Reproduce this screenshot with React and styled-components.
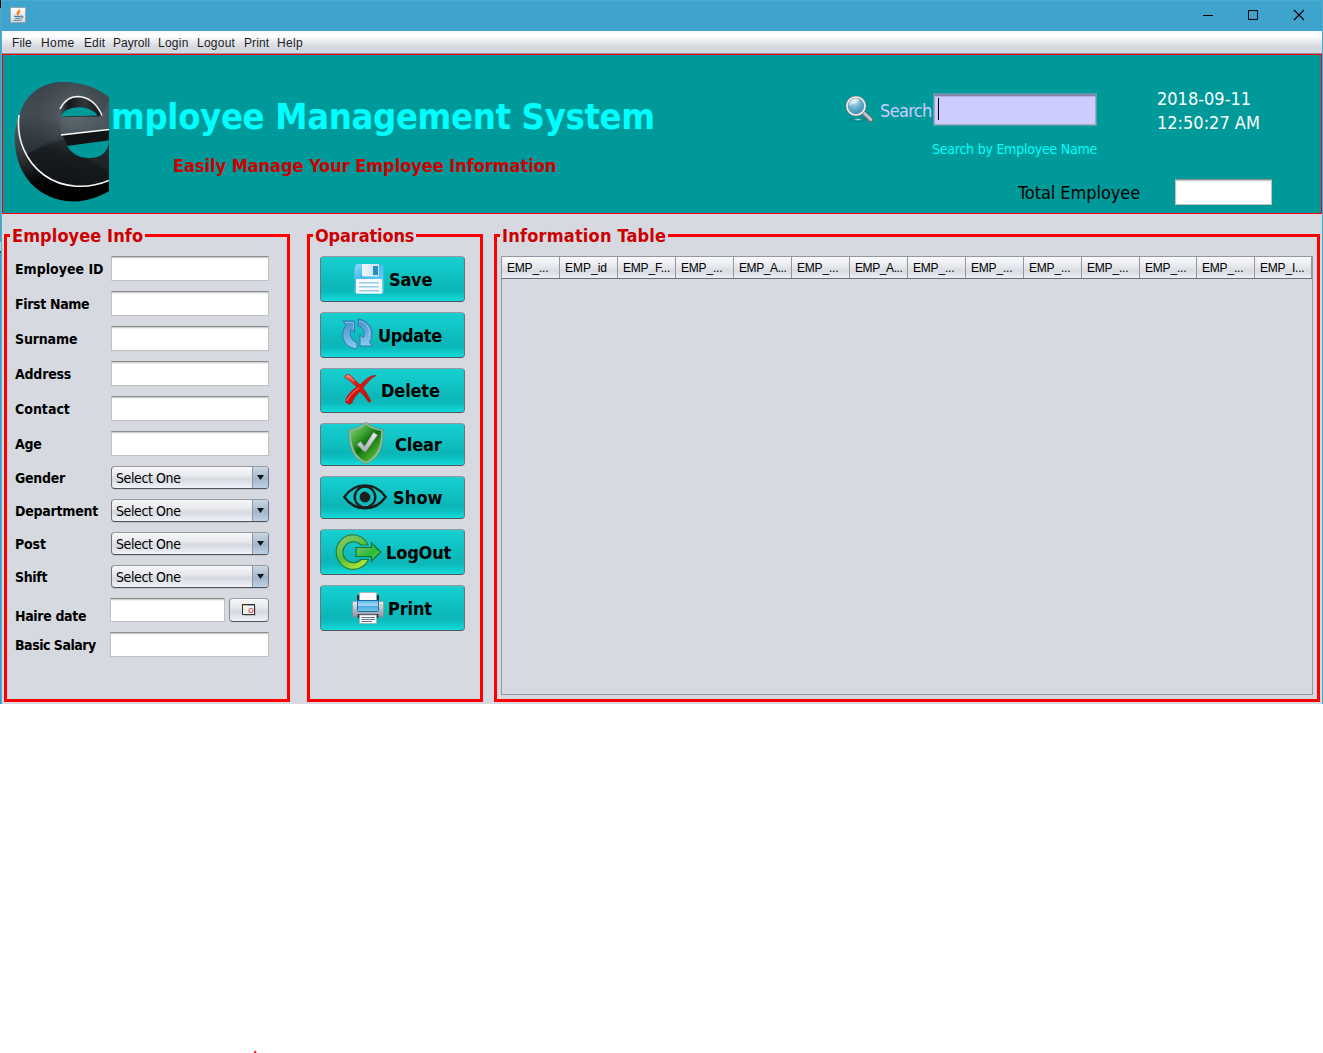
import React from "react";
import styled, { createGlobalStyle } from "styled-components";

const Global = createGlobalStyle`
  * { box-sizing: border-box; }
  body { margin: 0; background: #fff; overflow: hidden; }
`;

const ui = `"DejaVu Sans Condensed", "DejaVu Sans", sans-serif`;
const arial = `"Liberation Sans", Arial, sans-serif`;

const Page = styled.div`
  height: 1053px;
  display: flex;
  flex-direction: column;
  justify-content: space-between;
  font-family: ${ui};
  font-stretch: condensed;
  color: #000;
`;

const Window = styled.div`
  width: 1323px;
  height: 704px;
  display: grid;
  grid-template-columns: 2px 1320px 1px;
  grid-template-rows: 31px 23px 160px 490px;
  background: #d6d9e0;
`;

const EdgeLeft = styled.div`
  grid-row: 1 / 5;
  background: linear-gradient(
    to bottom,
    #000 0 8px, #48a3bf 8px 242px, #a9d8cf 242px 251px, #1e5060 251px 253px, #3a9cc2 253px
  );
  border-right: 1px solid #53add0;
`;

const EdgeRight = styled.div`
  grid-row: 1 / 5;
  grid-column: 3;
  background: #4cabd0;
`;

const TitleBar = styled.header`
  grid-column: 2;
  display: flex;
  align-items: center;
  justify-content: space-between;
  padding: 0 17px 2px 8px;
  background: #3ea4ce;
  border-top: 1px solid #4aaccd;
`;

const WindowControls = styled.div`
  display: flex;
  gap: 34px;
  svg { display: block; }
`;

const MenuBar = styled.nav`
  grid-column: 2;
  display: flex;
  padding-left: 10px;
  background: linear-gradient(#f6f7f8 0, #ffffff 5px, #eeeff2 9px, #dcdee4 14px, #d3d6de 18px, #d6d9e0 21px);
  border-bottom: 1px solid #8f9298;
`;

const MenuItem = styled.span`
  width: ${(p) => p.$w}px;
  white-space: nowrap;
  font: 12px/24px ${arial};
  letter-spacing: ${(p) => p.$ls ?? 0.25}px;
  color: #1c1c24;
`;

const Banner = styled.section`
  grid-column: 2;
  display: flex;
  background: #009999;
  border: 1px solid #ff0000;
`;

const LogoSlot = styled.div`
  width: 106px;
  padding: 27px 0 0 11px;
  svg { display: block; }
`;

const Titles = styled.div`
  width: 736px;
  padding: 40px 0 0 2px;
`;

const Title = styled.h1`
  margin: 0;
  font-size: 36px;
  line-height: 44px;
  letter-spacing: -0.3px;
  color: #00ffff;
  white-space: nowrap;
`;

const Subtitle = styled.h2`
  margin: 15px 0 0 62px;
  font-size: 18px;
  line-height: 24px;
  letter-spacing: -0.04px;
  color: #cc0000;
  white-space: nowrap;
`;

const Status = styled.div`
  flex: 1;
  padding-top: 32px;
`;

const StatusTop = styled.div`
  display: flex;
  height: 92px;
`;

const SearchRow = styled.div`
  display: flex;
  align-items: flex-start;
  padding-top: 6px;
  width: 252px;
`;

const Magnifier = styled.svg`
  margin-top: 2px;
  flex: none;
`;

const SearchLabel = styled.label`
  width: 53px;
  margin-left: 7px;
  flex: none;
  font-size: 18px;
  line-height: 35px;
  letter-spacing: -0.65px;
  color: #ccccff;
  white-space: nowrap;
`;

const SearchField = styled.div`
  width: 164px;
  height: 33px;
  flex: none;
  padding: 4px 5px 5px 4px;
  background: #ccccff;
  border: 1px solid #4f9fbe;
  box-shadow: inset 0 2px 0 #8484a6, inset 1px 0 0 #a3a3b8, inset -1px -1px 0 #a9a9b4, inset 0 3px 1px #b0b0dc;
`;

const Caret = styled.span`
  display: block;
  width: 1px;
  height: 22px;
  background: #000;
`;

const Hint = styled.div`
  margin: 11px 0 0 87px;
  font-size: 14px;
  line-height: 20px;
  letter-spacing: -0.23px;
  color: #00ffff;
  white-space: nowrap;
`;

const Clock = styled.div`
  margin-left: 60px;
  font-size: 18px;
  line-height: 24px;
  color: #fff;
  white-space: nowrap;
`;

const TotalRow = styled.div`
  display: flex;
  align-items: flex-start;
  padding-left: 173px;
`;

const TotalLabel = styled.div`
  width: 157px;
  font-size: 18px;
  line-height: 28px;
  letter-spacing: -0.05px;
  white-space: nowrap;
`;

const Body = styled.main`
  grid-column: 2;
  display: flex;
  align-items: flex-start;
  padding: 11px 0 0 2px;
`;

const Group = styled.fieldset`
  width: ${(p) => p.$w}px;
  height: 477px;
  margin: 0 ${(p) => p.$after ?? 0}px 0 0;
  padding: 10px 3px 0;
  min-width: 0;
  border: 3px solid #ff0000;
`;

const Legend = styled.legend`
  width: ${(p) => p.$w}px;
  height: 21px;
  padding: 0 0 0 2px;
  font-weight: bold;
  font-size: 18px;
  line-height: 22px;
  letter-spacing: ${(p) => p.$ls ?? 0}px;
  color: #cc0000;
  white-space: nowrap;
`;

const Row = styled.div`
  display: flex;
  height: ${(p) => p.$h ?? 25}px;
  margin-bottom: 10px;
  padding-left: 5px;
`;

const Label = styled.label`
  width: ${(p) => p.$w ?? 96}px;
  padding-top: ${(p) => p.$drop ?? 0}px;
  flex: none;
  font-weight: bold;
  font-size: 14px;
  line-height: 25px;
  letter-spacing: ${(p) => p.$ls ?? -0.3}px;
  white-space: nowrap;
`;

const Field = styled.div`
  width: ${(p) => p.$w ?? 158}px;
  height: ${(p) => p.$h ?? 25}px;
  background: #fff;
  border: 1px solid #c0c0c3;
  border-top-color: #8c8d8f;
  box-shadow: inset 0 1px 0 #cfcfd0, inset 0 2px 0 #f1f1f1;
`;

const Combo = styled.div`
  display: flex;
  width: 158px;
  height: 23px;
  padding-left: 4px;
  overflow: hidden;
  border: 1px solid #73767c;
  border-top-color: #96999e;
  border-bottom-color: #4f535a;
  border-radius: 4px;
  box-shadow: 0 1px 0 #c3c6cd;
  background: linear-gradient(#f8f8fa, #e8e9ed 40%, #d6d9df 58%, #f0f3f9);
  font-size: 14px;
  line-height: 23px;
  letter-spacing: -0.4px;
  white-space: nowrap;
`;

const ComboArrow = styled.span`
  display: flex;
  width: 16px;
  margin-left: auto;
  align-items: center;
  justify-content: center;
  border-left: 1px solid #8498ac;
  background: linear-gradient(#c9d8e2, #a4b6c9 55%, #bcd2e6);
`;

const CalendarButton = styled.button`
  display: flex;
  width: 40px;
  height: 24px;
  margin-left: 4px;
  padding: 0;
  align-items: center;
  justify-content: center;
  border: 1px solid #85888e;
  border-top-color: #999ca2;
  border-bottom-color: #50545b;
  border-radius: 4px;
  background: linear-gradient(#f9f9fb, #e4e6ea 40%, #d6d9df 60%, #eff2f8);
`;

const Actions = styled.div`
  display: flex;
  flex-direction: column;
  gap: 10px;
  padding-left: 7px;
`;

const ActionButton = styled.button`
  display: flex;
  width: 145px;
  height: ${(p) => p.$h}px;
  padding: 0 0 0 ${(p) => p.$x - 1}px;
  align-items: center;
  border: 1px solid #5f7a80;
  border-top-color: #8f9ba0;
  border-bottom-color: #4d5860;
  border-radius: 4px;
  background: linear-gradient(#1fd0d1 0, #14cdce 8%, #10c0c1 45%, #0cb6b7 68%, #0cbcbd 80%, #12d9da 99%);
  font: bold 18px/22px ${ui};
  font-stretch: condensed;
  letter-spacing: ${(p) => p.$ls ?? -0.15}px;
  white-space: nowrap;
  color: #000;
`;

const ActionText = styled.span`
  padding-top: 1px;
`;

const IconSlot = styled.span`
  display: flex;
  flex: none;
  width: ${(p) => p.$w}px;
  margin-top: -${(p) => p.$lift ?? 1}px;
  svg { display: block; flex: none; }
`;

const Table = styled.div`
  width: 812px;
  height: 439px;
  margin-left: 1px;
  border: 1px solid #9297a1;
`;

const HeadRow = styled.div`
  display: grid;
  grid-template-columns: repeat(11, 58px) 57px 58px 57px;
  height: 22px;
  border-bottom: 1px solid #6c717b;
  background: linear-gradient(#fbfbfc, #e6e8ec 45%, #d8dbe1 65%, #eceff5);
`;

const HeadCell = styled.div`
  height: 21px;
  padding-left: 5px;
  overflow: hidden;
  border-right: 1px solid #93979f;
  font: 12px/22px ${arial};
  letter-spacing: ${(p) => p.$ls}px;
  white-space: nowrap;
`;

const Speck = styled.div`
  width: 3px;
  height: 2px;
  margin-left: 254px;
  background: linear-gradient(to right, #ff2020 2px, #ff9a9a 2px);
  clip-path: polygon(0 0, 66% 0, 66% 50%, 100% 50%, 100% 100%, 0 100%);
`;

const JavaIcon = () => (
  <svg width="16" height="16" viewBox="0 0 16 16">
    <defs>
      <linearGradient id="jv" x2="0" y2="1"><stop stopColor="#fff" /><stop offset="1" stopColor="#d5d8da" /></linearGradient>
    </defs>
    <rect x=".5" y=".5" width="15" height="15" rx="1" fill="url(#jv)" stroke="#9aa3a8" />
    <path d="M9.500 2.300C10 4 5.800 4.600 7.400 8M10.300 4.400C8 5.500 8.700 6.500 8.500 8" fill="none" stroke="#ef7d1c" strokeWidth="1.300" />
    <path d="M4 9.400h7M5 11.200h5.500M3.500 13.300h8M11 9c3-.4 2 2-.2 2.300" fill="none" stroke="#4f7f9f" strokeWidth="1.100" />
  </svg>
);

const EmployeeLogo = () => (
  <svg width="95" height="121" viewBox="0 0 95 121">
    <defs>
      <linearGradient id="face" x1=".5" y1="0" x2=".4" y2="1">
        <stop stopColor="#3a4248" /><stop offset=".35" stopColor="#434c53" /><stop offset=".65" stopColor="#20262a" /><stop offset="1" stopColor="#13171a" />
      </linearGradient>
      <linearGradient id="side" x1="0" y1="0" x2=".35" y2="1">
        <stop stopColor="#5b6469" /><stop offset=".45" stopColor="#30363a" /><stop offset=".75" stopColor="#050606" /><stop offset="1" stopColor="#000" />
      </linearGradient>
      <radialGradient id="glow" cx=".62" cy=".3" r=".45"><stop stopColor="#69747d" stopOpacity=".75" /><stop offset="1" stopColor="#4d565d" stopOpacity="0" /></radialGradient>
      <linearGradient id="rim"><stop stopColor="#555b5f" /><stop offset=".2" stopColor="#15181a" /><stop offset=".6" stopColor="#30363a" /><stop offset="1" stopColor="#111" /></linearGradient>
    </defs>
    <path d="M6 32C-1 47 0 62 3 75C10 103 33 119.500 60 119.500C74 119 85 115 95 109V95L60 60Z" fill="url(#side)" />
    <path d="M95 15.500C84 6 68 0 47 0C24 1 9 16 5.500 34C2 57 11 80 29 93C48 106 75 108 95 98Z" fill="url(#face)" />
    <path d="M95 15.500C84 6 68 0 47 0C24 1 9 16 5.500 34C2 57 11 80 29 93C48 106 75 108 95 98Z" fill="url(#glow)" />
    <path d="M6 33L47 53L11 73C5 62 4 48 6 33Z" fill="#454e55" opacity=".35" />
    <path d="M11 73L50 57L70 75L95 90V98C65 112 27 105 11 73Z" fill="#0b0e10" opacity=".35" />
    <path d="M47 53L95 46V18L88 33L46 34Z" fill="#5f6970" opacity=".35" />
    <path d="M46 35C44 22 52 15 63 14.500C75 14 84 22 88 33L84 34.500Z" fill="url(#rim)" />
    <path d="M47 34.500C51 23 76 22 83.500 33.500Z" fill="#009999" />
    <path d="M46 27C51 17 57 14.500 64 14.500C76 15 83 22 88 33.500" fill="none" stroke="#f1f1f1" strokeWidth="1.500" />
    <path d="M48 53L95 47V58L54 64Z" fill="#111415" />
    <path d="M47 53L95 47.500" stroke="#fff" strokeWidth="1.700" />
    <path d="M53 64L95 58.500C94 70 88 76 75 76C65 76 58 72 53 64Z" fill="#009999" />
    <path d="M5 33C2 57 12 80 30 93C49 107 75 107 95 98.500" fill="none" stroke="#f4f4f4" strokeWidth="1.600" />
  </svg>
);

const SearchIcon = () => (
  <Magnifier width="28" height="28" viewBox="0 0 28 28">
    <defs>
      <radialGradient id="lens" cx=".4" cy=".25" r=".8"><stop stopColor="#cfeaf3" /><stop offset=".45" stopColor="#69b3cf" /><stop offset="1" stopColor="#2d87b1" /></radialGradient>
      <radialGradient id="lshadow"><stop stopColor="#a5e8e6" /><stop offset=".3" stopColor="#23a5a6" /><stop offset=".5" stopColor="#057f82" /><stop offset="1" stopColor="#009999" stopOpacity="0" /></radialGradient>
    </defs>
    <ellipse cx="13" cy="24.500" rx="12" ry="3.300" fill="url(#lshadow)" />
    <path d="M18 17.500L25.800 25" stroke="#6b6f74" strokeWidth="5" strokeLinecap="round" />
    <path d="M18 17L25.800 24.500" stroke="#c3c5c8" strokeWidth="3" strokeLinecap="round" />
    <circle cx="11" cy="11" r="9.200" fill="url(#lens)" stroke="#767f87" strokeWidth="2.600" />
    <circle cx="11" cy="11" r="9" fill="none" stroke="#e9edf0" strokeWidth="1.700" />
    <path d="M4 9.500C5 4.500 10 2 14 4C14 9 8 8 4 11Z" fill="#fff" opacity=".45" />
  </Magnifier>
);

const SaveIcon = () => (
  <svg width="30" height="30" viewBox="0 0 30 30">
    <defs>
      <linearGradient id="sv" x2=".7" y2="1"><stop stopColor="#94dcfa" /><stop offset=".4" stopColor="#42b9ee" /><stop offset="1" stopColor="#6ed8fa" /></linearGradient>
      <linearGradient id="sv2" x2="1"><stop stopColor="#eff7fb" /><stop offset="1" stopColor="#c5e0ee" /></linearGradient>
    </defs>
    <path d="M2.500 0H27Q29.500.5 29.500 3V28Q29 30 27 30H3Q.5 29.500.5 27V4Z" fill="url(#sv)" />
    <path d="M8 0H25V11Q25 12.500 23.500 12.500H10Q8 12.500 8 11Z" fill="url(#sv2)" />
    <rect x="19" y="2" width="5" height="9" fill="#288fc5" />
    <rect x="2" y="15" width="26" height="14.500" rx="1" fill="#f7fbfd" />
    <path d="M5 18.700H25M5 22.700H25M5 26.700H25" stroke="#9bcbe4" strokeWidth="1.400" />
  </svg>
);

const UpdateIcon = () => (
  <svg width="31" height="32" viewBox="0 0 31 32">
    <defs><linearGradient id="up" x2="0" y2="1"><stop stopColor="#438fca" /><stop offset="1" stopColor="#8cc9f0" /></linearGradient></defs>
    <g fill="url(#up)" stroke="#2f78b2" strokeWidth="1" strokeLinejoin="round">
      <path d="M.7 3H12.500V15L9.300 11.700C7 16 9 22.500 15 24.500V31C6 30.500.7 23.500.7 17C.7 13 2 9.500 4.300 6.800Z" />
      <path d="M16 1C24 1.500 30 8 30 15.500C30 19 29 22 27.500 24.500L30.500 28H18V16.500L21.500 19.500C24 14 21 9 16 8Z" />
    </g>
    <path d="M3 4.500H11.500V11M17 3C24 4 29 11 27 18" fill="none" stroke="#b9dff6" opacity=".6" />
  </svg>
);

const DeleteIcon = () => (
  <svg width="33" height="31" viewBox="0 0 33 31">
    <defs><linearGradient id="dl" x2=".6" y2="1"><stop stopColor="#ff7a67" /><stop offset=".4" stopColor="#db1711" /><stop offset="1" stopColor="#c40f0c" /></linearGradient></defs>
    <path d="M1 2C4-1 7 1 9 4L16 11C21 6 26 1 32 1.500C27 4 23 9 19 14C22 18 25 23 27 27.500L24.500 28C22 24 19 20 16 17.500C12 21 9 25 8 29C6 31 2 30 1.500 27C3 21 8 16 13 13C8 9 5 5 1 4Z" fill="url(#dl)" stroke="#a8120e" strokeWidth=".6" />
    <path d="M2.500 2.500C5 1 7 4 10 7M3 27C5 22 10 17 15 14" fill="none" stroke="#ffd2c9" strokeWidth="1" opacity=".6" />
  </svg>
);

const ClearIcon = () => (
  <svg width="36" height="42" viewBox="0 0 36 42">
    <defs>
      <linearGradient id="sh" x2=".8" y2="1"><stop stopColor="#8ed383" /><stop offset=".35" stopColor="#3ba02f" /><stop offset=".55" stopColor="#0e6f0a" /><stop offset="1" stopColor="#5fc73f" /></linearGradient>
      <linearGradient id="ck" x2="0" y2="1"><stop stopColor="#e9ecee" /><stop offset="1" stopColor="#a7adb3" /></linearGradient>
    </defs>
    <path d="M18 0C13 4.500 7 7 .8 7.500C.8 24 3 35.500 18 42C33 35.500 35.200 24 35.200 7.500C29 7 23 4.500 18 0Z" fill="#8dbb9b" stroke="#5a8d70" strokeWidth=".6" />
    <path d="M18 2.500C13 6.500 8 8.500 2.800 9C3 23 6 34 18 39.800C30 34 33 23 33.200 9C28 8.500 23 6.500 18 2.500Z" fill="url(#sh)" />
    <path d="M9 22.500L12.500 19.500L16.500 24.500L25.500 10.500L29.500 13L18 29.500H16Z" fill="url(#ck)" stroke="#8f979b" strokeWidth=".5" />
  </svg>
);

const ShowIcon = () => (
  <svg width="44" height="26" viewBox="0 0 44 26" fill="none" stroke="#1d1d1b">
    <path d="M1.300 13C12-2.500 32-2.500 42.700 13C32 28 12 28 1.300 13Z" strokeWidth="2.400" />
    <circle cx="22" cy="13" r="10.300" strokeWidth="2.300" />
    <circle cx="22" cy="13" r="5.400" fill="#1d1d1b" stroke="none" />
    <path d="M23.500 7.500A5.500 5.500 0 0 1 27.300 11" stroke="#10b8b9" strokeWidth="1.400" />
  </svg>
);

const LogoutIcon = () => (
  <svg width="48" height="37" viewBox="0 0 48 37">
    <defs>
      <linearGradient id="lo" x2=".6" y2="1"><stop stopColor="#93c87d" /><stop offset=".6" stopColor="#54c13b" /><stop offset="1" stopColor="#b2e33a" /></linearGradient>
      <linearGradient id="lo2" x2="1" y2="1"><stop stopColor="#86c578" /><stop offset=".6" stopColor="#27bb35" /><stop offset="1" stopColor="#8bdd36" /></linearGradient>
    </defs>
    <path d="M34 11C31 4 25 .8 18 .8A17 17.300 0 1 0 34.500 25.500H27A10.500 10.500 0 1 1 27 11Z" fill="url(#lo)" stroke="#1e7a35" strokeWidth="1.100" />
    <path d="M22 13.500H37.500V9L46.700 18L37.500 27V22.500H22Z" fill="url(#lo2)" stroke="#18753a" strokeWidth="1.200" />
  </svg>
);

const PrintIcon = () => (
  <svg width="32" height="32" viewBox="0 0 32 32">
    <defs>
      <linearGradient id="pr" x2="0" y2="1"><stop stopColor="#eef0f5" /><stop offset=".6" stopColor="#aeb4c0" /><stop offset="1" stopColor="#8b92a0" /></linearGradient>
      <linearGradient id="pb" x2="0" y2="1"><stop stopColor="#5fb3e5" /><stop offset=".45" stopColor="#a3daf7" /><stop offset=".5" stopColor="#4aa7df" /><stop offset="1" stopColor="#7dc7ef" /></linearGradient>
    </defs>
    <path d="M5 3H27V20H5Z" fill="#2b323d" />
    <path d="M.5 9.500H5.500V18H26.500V9.500H31.500V25H.5Z" fill="url(#pr)" stroke="#858d9a" strokeWidth=".6" />
    <rect x="7.500" y=".5" width="17" height="11" fill="#fbfbfb" stroke="#aaa" strokeWidth=".7" />
    <rect x="5.500" y="8.500" width="21" height="11" rx="1" fill="url(#pb)" stroke="#1b6fab" />
    <rect x="5.500" y="22" width="21" height="4" rx="1" fill="#303743" />
    <rect x="7.500" y="23" width="17" height="8.500" fill="#fff" stroke="#a0a5ad" strokeWidth=".7" />
    <path d="M9.500 25.500H23M9.500 27.500H23M9.500 29.500H20" stroke="#556184" strokeWidth=".9" />
    <rect x="28" y="12" width="1.500" height="1.500" fill="#b9d531" />
  </svg>
);

const CalendarIcon = () => (
  <svg width="14" height="12" viewBox="0 0 14 12">
    <path d="M2 11.500H13.500V2" fill="none" stroke="#bfc1c5" />
    <rect x=".5" y=".5" width="12" height="10" fill="#f7f7f7" stroke="#333" />
    <path d="M1 1.500H5.500" stroke="#eab64b" /><path d="M5.500 1.500H12" stroke="#7fa5d0" />
    <path d="M3.500 3V10M6.500 3V10M1 5.500H12M1 8H12" stroke="#ddd" strokeWidth=".6" />
    <circle cx="9" cy="6.500" r="2" fill="#fff" stroke="#e05a55" strokeWidth="1.100" />
  </svg>
);

const menu = [
  ["File", 29, 0.1], ["Home", 43, 0.4], ["Edit", 29, 0.1], ["Payroll", 45, 0.05], ["Login", 39], ["Logout", 47], ["Print", 33, 0.1], ["Help", 30, 0.3],
];

const textRows = [
  ["Employee ID", 0], ["First Name", -0.35], ["Surname", -0.15], ["Address", -0.2], ["Contact", 0], ["Age", -0.2],
];
const comboRows = [["Gender", -0.3], ["Department", -0.25], ["Post", -0.15], ["Shift", -0.35]];

const actions = [
  { text: "Save", h: 46, x: 34, w: 35, ls: -0.25, Icon: SaveIcon },
  { text: "Update", h: 46, x: 22, w: 36, ls: -0.35, lift: 2, Icon: UpdateIcon },
  { text: "Delete", h: 45, x: 24, w: 37, lift: 2, Icon: DeleteIcon },
  { text: "Clear", h: 43, x: 28, w: 47, lift: 3, Icon: ClearIcon },
  { text: "Show", h: 43, x: 23, w: 50, ls: 0.1, Icon: ShowIcon },
  { text: "LogOut", h: 46, x: 14, w: 52, lift: 0, Icon: LogoutIcon },
  { text: "Print", h: 46, x: 32, w: 36, Icon: PrintIcon },
];

const columns = [
  "EMP_...", "EMP_id", "EMP_F...", "EMP_...", "EMP_A...", "EMP_...", "EMP_A...",
  "EMP_...", "EMP_...", "EMP_...", "EMP_...", "EMP_...", "EMP_...", "EMP_I...",
];

const columnTracking = (label) => {
  if (label === "EMP_id") return 0;
  return label === "EMP_A..." ? -0.4 : -0.2;
};

export default function App() {
  return (
    <Page>
      <Global />
      <Window>
        <EdgeLeft />
        <TitleBar>
          <JavaIcon />
          <WindowControls>
            <svg width="12" height="12" viewBox="0 0 12 12"><path d="M1 6.500H11" stroke="#000" /></svg>
            <svg width="11" height="12" viewBox="0 0 11 12"><path d="M.5 1.500h9v9h-9z" fill="none" stroke="#000" /></svg>
            <svg width="12" height="12" viewBox="0 0 12 12"><path d="M1 1L11 11M11 1L1 11" stroke="#000" strokeWidth="1.100" /></svg>
          </WindowControls>
        </TitleBar>
        <EdgeRight />
        <MenuBar>
          {menu.map(([t, w, ls]) => <MenuItem key={t} $w={w} $ls={ls}>{t}</MenuItem>)}
        </MenuBar>
        <Banner>
          <LogoSlot><EmployeeLogo /></LogoSlot>
          <Titles>
            <Title>mployee Management System</Title>
            <Subtitle>Easily Manage Your Employee Information</Subtitle>
          </Titles>
          <Status>
            <StatusTop>
              <div>
                <SearchRow>
                  <SearchIcon />
                  <SearchLabel>Search</SearchLabel>
                  <SearchField><Caret /></SearchField>
                </SearchRow>
                <Hint>Search by Employee Name</Hint>
              </div>
              <Clock>
                <div>2018-09-11</div>
                <div>12:50:27 AM</div>
              </Clock>
            </StatusTop>
            <TotalRow>
              <TotalLabel>Total Employee</TotalLabel>
              <Field $w={97} $h={26} />
            </TotalRow>
          </Status>
        </Banner>
        <Body>
          <Group $w={286} $after={17}>
            <Legend $w={135} $ls={0.08}>Employee Info</Legend>
            {textRows.map(([t, ls]) => (
              <Row key={t}><Label $ls={ls} $drop={1}>{t}</Label><Field /></Row>
            ))}
            {comboRows.map(([t, ls]) => (
              <Row key={t} $h={23}>
                <Label $ls={ls}>{t}</Label>
                <Combo>
                  Select One
                  <ComboArrow>
                    <svg width="7" height="5" viewBox="0 0 7 5"><path d="M0 0H7L3.500 5Z" fill="#111" /></svg>
                  </ComboArrow>
                </Combo>
              </Row>
            ))}
            <Row $h={24}>
              <Label $w={95} $drop={6} $ls={-0.35}>Haire date</Label>
              <Field $w={115} $h={24} />
              <CalendarButton><CalendarIcon /></CalendarButton>
            </Row>
            <Row><Label $w={95} $ls={-0.48} $drop={1}>Basic Salary</Label><Field $w={159} /></Row>
          </Group>
          <Group $w={176} $after={11}>
            <Legend $w={103} $ls={-0.15}>Oparations</Legend>
            <Actions>
              {actions.map(({ text, h, x, w, ls, lift, Icon }) => (
                <ActionButton key={text} $h={h} $x={x} $ls={ls}>
                  <IconSlot $w={w} $lift={lift}><Icon /></IconSlot>
                  <ActionText>{text}</ActionText>
                </ActionButton>
              ))}
            </Actions>
          </Group>
          <Group $w={826}>
            <Legend $w={168} $ls={0.2}>Information Table</Legend>
            <Table>
              <HeadRow>
                {columns.map((c, i) => <HeadCell key={i} $ls={columnTracking(c)}>{c}</HeadCell>)}
              </HeadRow>
            </Table>
          </Group>
        </Body>
      </Window>
      <Speck />
    </Page>
  );
}
